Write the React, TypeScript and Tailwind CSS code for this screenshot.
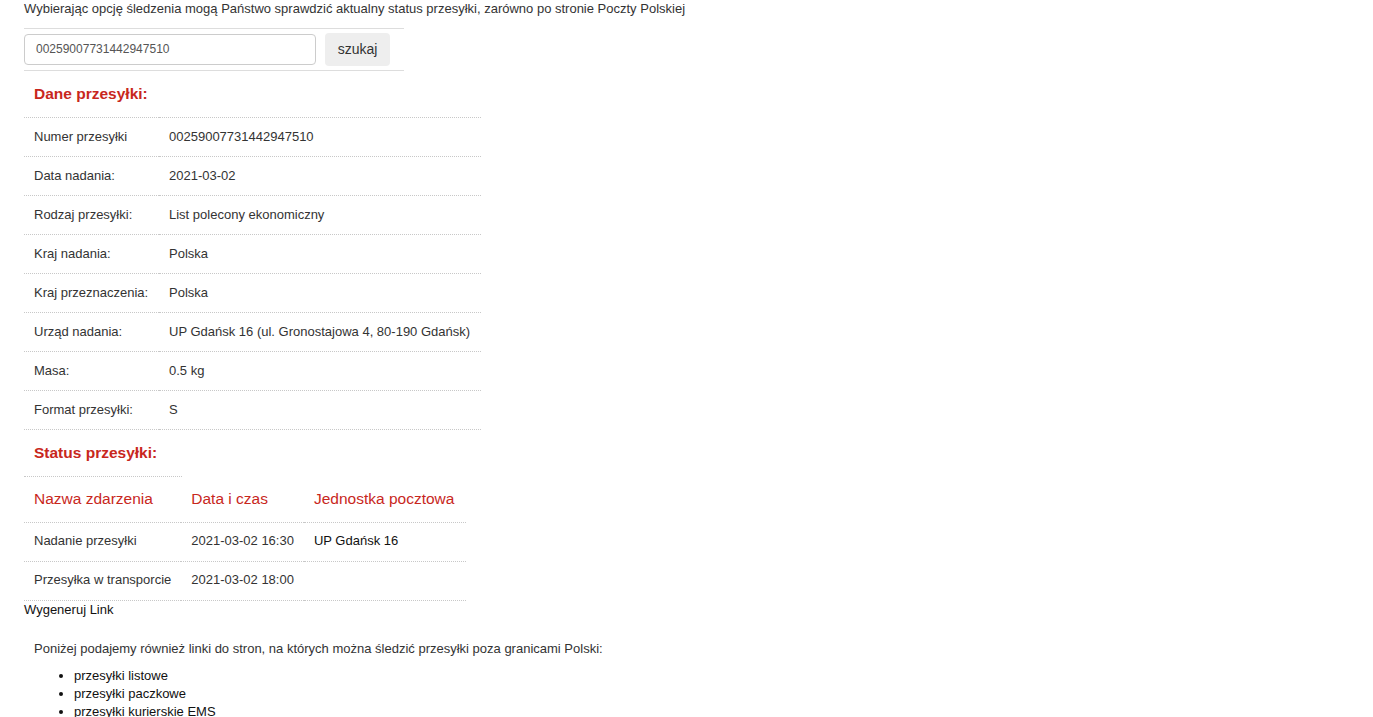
const RED = "text-[#c8271d]";

const details: [string, string][] = [
  ["Numer przesyłki", "00259007731442947510"],
  ["Data nadania:", "2021-03-02"],
  ["Rodzaj przesyłki:", "List polecony ekonomiczny"],
  ["Kraj nadania:", "Polska"],
  ["Kraj przeznaczenia:", "Polska"],
  ["Urząd nadania:", "UP Gdańsk 16 (ul. Gronostajowa 4, 80-190 Gdańsk)"],
  ["Masa:", "0.5 kg"],
  ["Format przesyłki:", "S"],
];

const events: [string, string, string][] = [
  ["Nadanie przesyłki", "2021-03-02 16:30", "UP Gdańsk 16"],
  ["Przesyłka w transporcie", "2021-03-02 18:00", ""],
];

export default function App() {
  return (
    <div
      className="min-h-screen bg-white pl-6 text-[13px] leading-[17px] text-[#333]"
      style={{ fontFamily: '"Liberation Sans", Arial, sans-serif' }}
    >
      <p className="whitespace-nowrap">
        Wybierając opcję śledzenia mogą Państwo sprawdzić aktualny status przesyłki, zarówno po stronie Poczty Polskiej
      </p>

      <div className="mt-[11px] flex h-[43px] w-[380px] items-center gap-[9px] border-y border-[#ddd] pb-[1px]">
        <input
          readOnly
          value="00259007731442947510"
          className="h-[31px] w-[292px] rounded-[4px] border border-[#ccc] px-[11px] text-[12px] text-[#555] outline-none"
        />
        <button className="h-[33px] w-[65px] rounded-[4px] bg-[#eee] text-[14px] text-[#333]">
          szukaj
        </button>
      </div>

      <h2 className={`flex h-[46px] items-center pb-[2px] pl-[10px] text-[15.5px] font-bold ${RED}`}>
        Dane przesyłki:
      </h2>
      <table className="w-[457px] border-collapse border-t border-dotted border-[#c8c8c8]">
        <tbody>
          {details.map(([label, value]) => (
            <tr key={label} className="h-[39px] border-b border-dotted border-[#c8c8c8]">
              <td className="w-[135px] pb-[2px] pl-[10px]">{label}</td>
              <td className="pb-[2px] pl-[10px]">{value}</td>
            </tr>
          ))}
        </tbody>
      </table>

      <h2
        className={`flex h-[47px] w-[158px] items-center border-b border-dotted border-[#c8c8c8] pb-[2px] pl-[10px] text-[15.5px] font-bold ${RED}`}
      >
        Status przesyłki:
      </h2>
      <table className="border-collapse">
        <thead>
          <tr className="h-[45px] border-b border-dotted border-[#c8c8c8]">
            <th className={`px-[10px] pb-[2px] text-left text-[15.5px] font-normal ${RED}`}>Nazwa zdarzenia</th>
            <th className={`px-[10px] pb-[2px] text-left text-[15.5px] font-normal ${RED}`}>Data i czas</th>
            <th className={`pl-[10px] pr-[12px] pb-[2px] text-left text-[15.5px] font-normal ${RED}`}>
              Jednostka pocztowa
            </th>
          </tr>
        </thead>
        <tbody>
          {events.map(([name, date, unit]) => (
            <tr key={name} className="h-[39px] border-b border-dotted border-[#c8c8c8]">
              <td className="px-[10px] pb-[2px]">{name}</td>
              <td className="px-[10px] pb-[2px]">{date}</td>
              <td className="px-[10px] pb-[2px] text-[#111]">{unit}</td>
            </tr>
          ))}
        </tbody>
      </table>

      <p className="text-[#111]">Wygeneruj Link</p>

      <div className="pl-[10px]">
        <p className="mt-[22px] leading-[18px]">
          Poniżej podajemy również linki do stron, na których można śledzić przesyłki poza granicami Polski:
        </p>
        <ul className="mt-[9px] list-disc pl-10 leading-[18px] text-[#111]">
          <li>przesyłki listowe</li>
          <li>przesyłki paczkowe</li>
          <li>przesyłki kurierskie EMS</li>
        </ul>
      </div>
    </div>
  );
}
